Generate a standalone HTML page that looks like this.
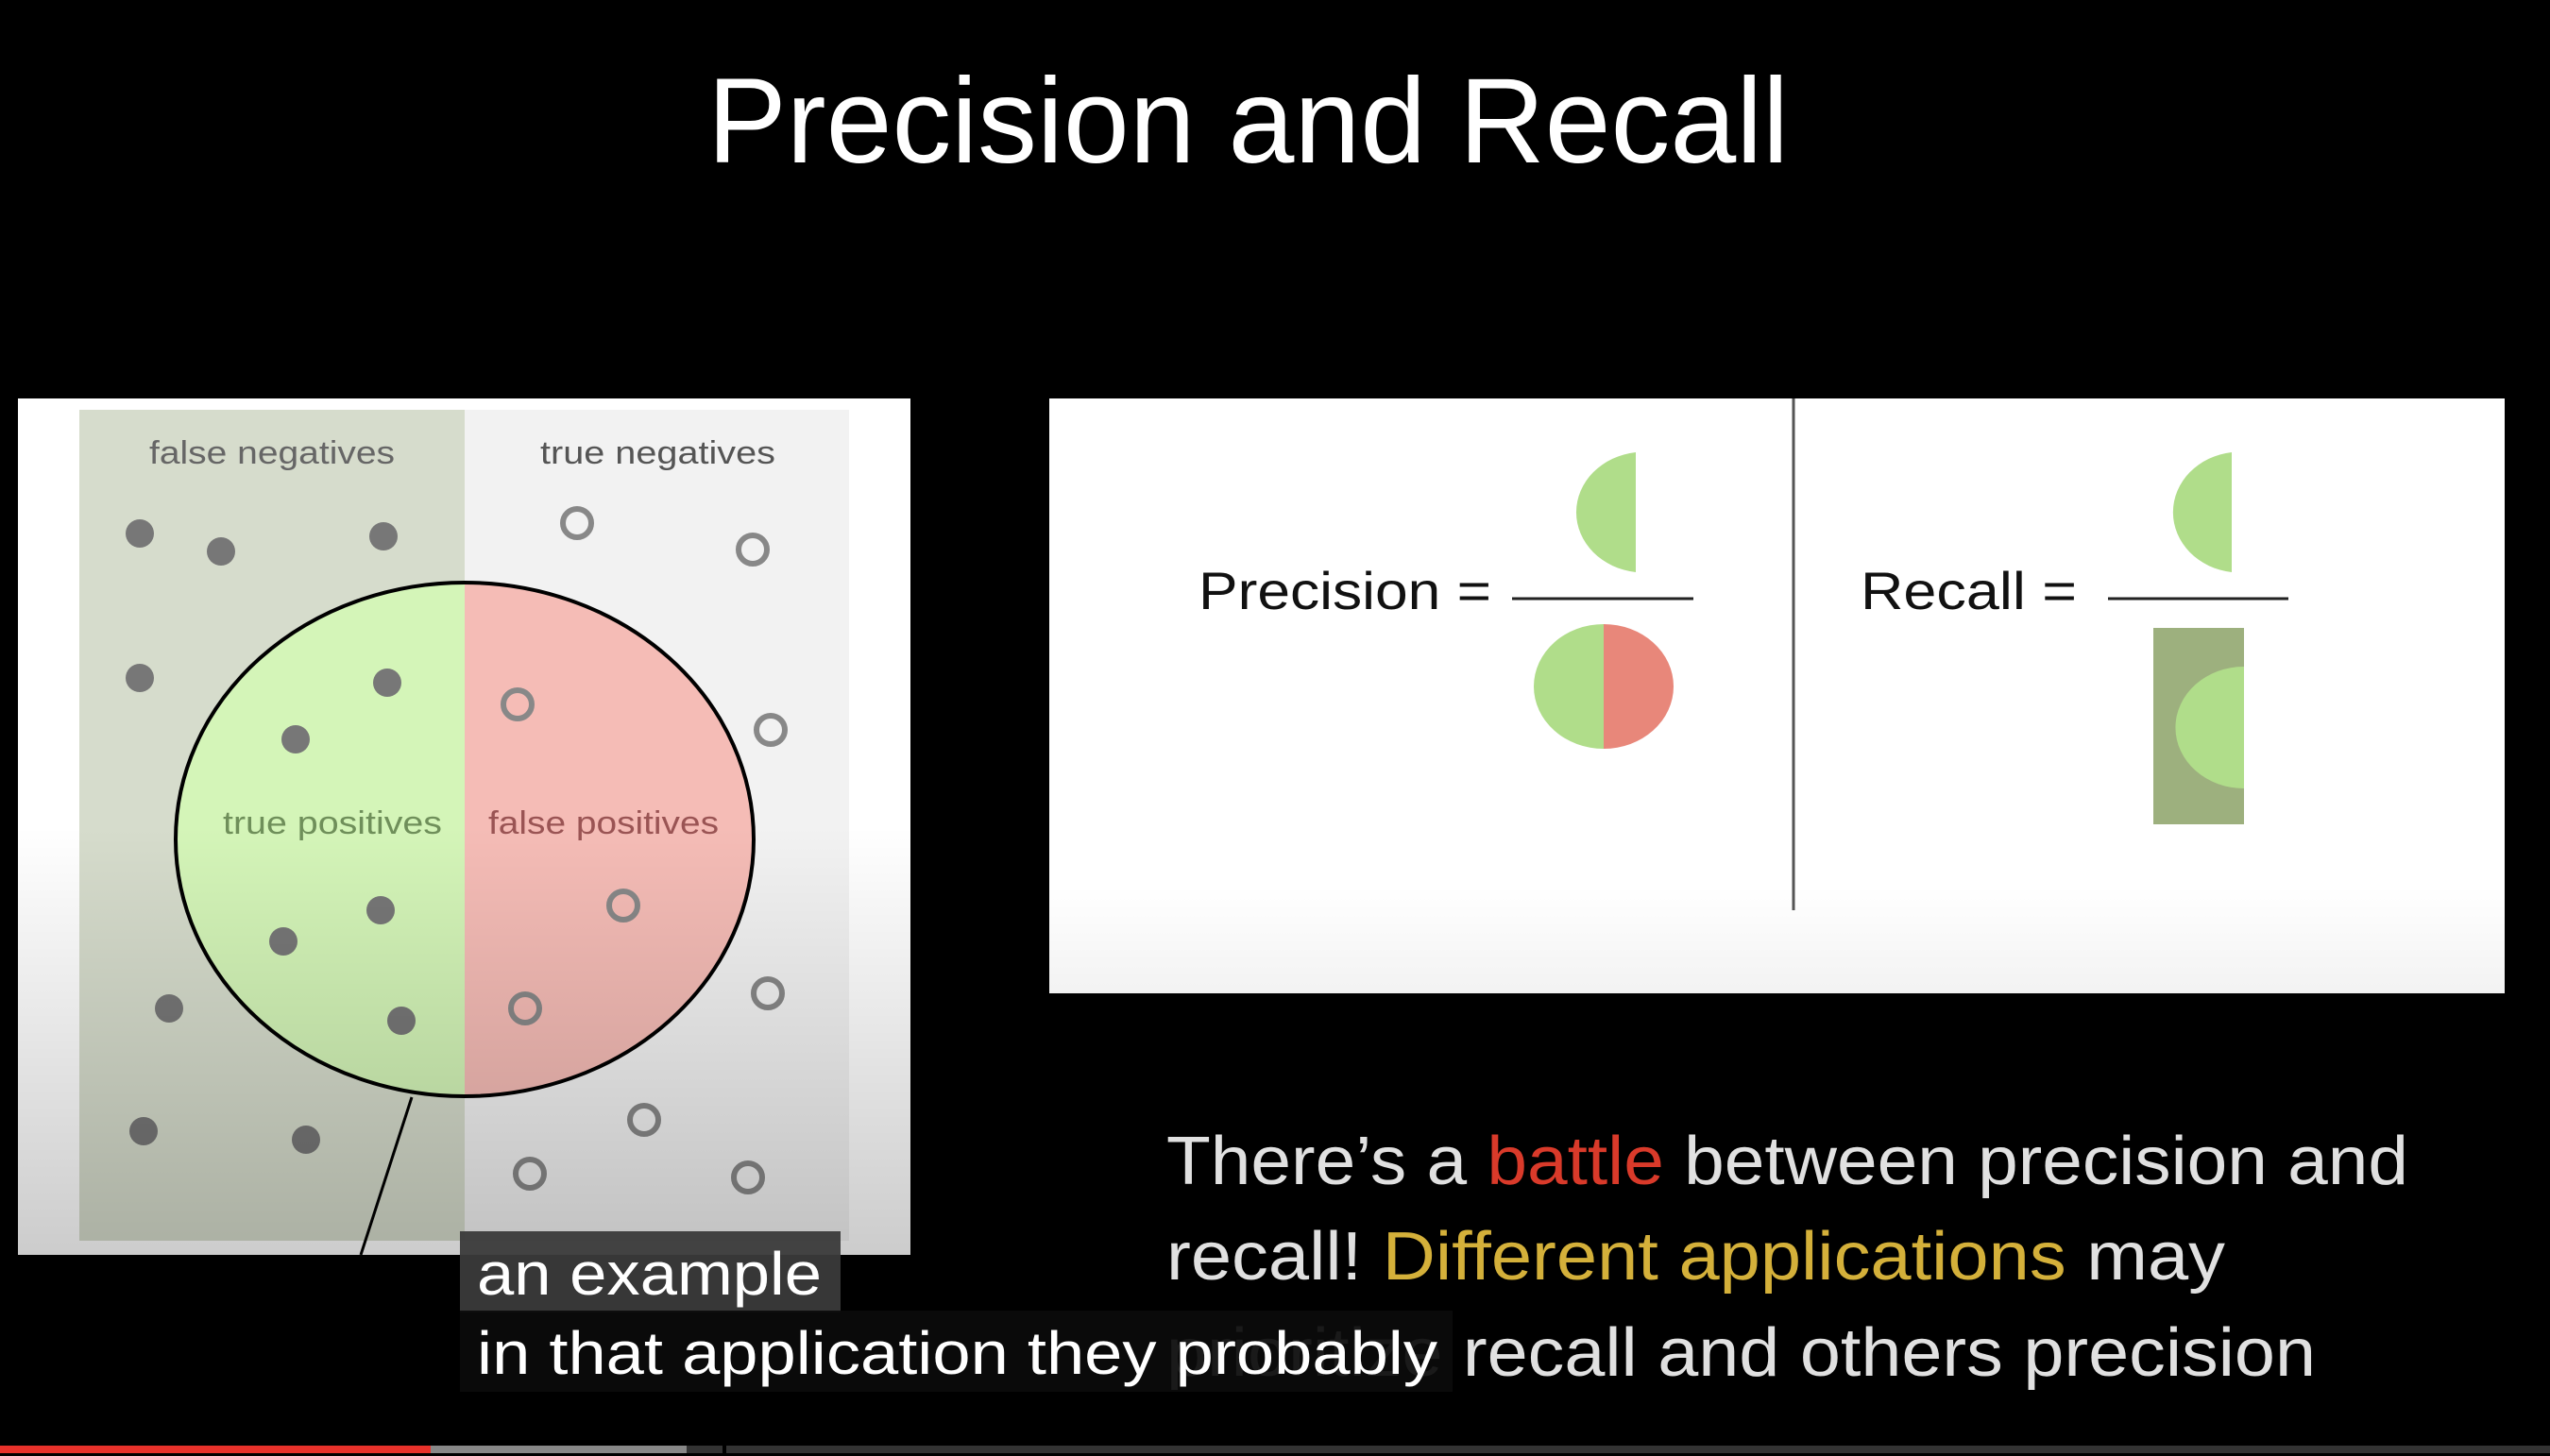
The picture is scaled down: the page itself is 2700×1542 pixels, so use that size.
<!DOCTYPE html>
<html><head><meta charset="utf-8"><style>
html,body{margin:0;padding:0;background:#000;width:2700px;height:1542px;overflow:hidden}
svg{display:block}
text{font-family:"Liberation Sans","DejaVu Sans",sans-serif}
</style></head><body>
<svg width="2700" height="1542" viewBox="0 0 2700 1542" xmlns="http://www.w3.org/2000/svg">
<defs>
<linearGradient id="shade" x1="0" y1="0" x2="0" y2="1">
<stop offset="0" stop-color="#000" stop-opacity="0"/>
<stop offset="0.5" stop-color="#000" stop-opacity="0"/>
<stop offset="1" stop-color="#000" stop-opacity="0.2"/>
</linearGradient>
<linearGradient id="shade2" x1="0" y1="0" x2="0" y2="1">
<stop offset="0" stop-color="#000" stop-opacity="0"/>
<stop offset="0.82" stop-color="#000" stop-opacity="0"/>
<stop offset="1" stop-color="#000" stop-opacity="0.05"/>
</linearGradient>
<clipPath id="cl"><rect x="0" y="0" width="492" height="1542"/></clipPath>
<clipPath id="cr"><rect x="492" y="0" width="600" height="1542"/></clipPath>
</defs>
<rect width="2700" height="1542" fill="#000"/>
<text x="749" y="172" font-size="128" fill="#fff" textLength="1145" lengthAdjust="spacingAndGlyphs">Precision and Recall</text>

<!-- left panel -->
<rect x="19" y="422" width="945" height="907" fill="#fff"/>
<rect x="84" y="434" width="408" height="880" fill="#d6dccc"/>
<rect x="492" y="434" width="407" height="880" fill="#f2f2f2"/>
<ellipse cx="492" cy="889" rx="306" ry="272" fill="#d4f5b8" clip-path="url(#cl)"/>
<ellipse cx="492" cy="889" rx="306" ry="272" fill="#f5bcb6" clip-path="url(#cr)"/>
<ellipse cx="492" cy="889" rx="306" ry="272" fill="none" stroke="#000" stroke-width="4"/>
<line x1="436" y1="1162" x2="382" y2="1329" stroke="#000" stroke-width="3"/>
<g fill="#777">
<circle cx="148" cy="565" r="15"/><circle cx="234" cy="584" r="15"/><circle cx="406" cy="568" r="15"/>
<circle cx="148" cy="718" r="15"/><circle cx="410" cy="723" r="15"/><circle cx="313" cy="783" r="15"/>
<circle cx="403" cy="964" r="15"/><circle cx="300" cy="997" r="15"/><circle cx="179" cy="1068" r="15"/>
<circle cx="425" cy="1081" r="15"/><circle cx="152" cy="1198" r="15"/><circle cx="324" cy="1207" r="15"/>
</g>
<g fill="none" stroke="#888" stroke-width="6">
<circle cx="611" cy="554" r="15"/><circle cx="797" cy="582" r="15"/><circle cx="548" cy="746" r="15"/>
<circle cx="816" cy="773" r="15"/><circle cx="660" cy="959" r="15"/><circle cx="813" cy="1052" r="15"/>
<circle cx="556" cy="1068" r="15"/><circle cx="682" cy="1186" r="15"/><circle cx="561" cy="1243" r="15"/>
<circle cx="792" cy="1247" r="15"/>
</g>
<text x="158" y="491" font-size="34" fill="#666" textLength="260" lengthAdjust="spacingAndGlyphs">false negatives</text>
<text x="572" y="491" font-size="34" fill="#555" textLength="249" lengthAdjust="spacingAndGlyphs">true negatives</text>
<text x="236" y="883" font-size="34" fill="#6f8f5a" textLength="232" lengthAdjust="spacingAndGlyphs">true positives</text>
<text x="517" y="883" font-size="34" fill="#9a5454" textLength="244" lengthAdjust="spacingAndGlyphs">false positives</text>
<rect x="19" y="422" width="945" height="907" fill="url(#shade)"/>

<!-- right panel -->
<rect x="1111" y="422" width="1541" height="630" fill="#fff"/>
<rect x="1111" y="422" width="1541" height="630" fill="url(#shade2)"/>
<line x1="1899" y1="422" x2="1899" y2="964" stroke="#555" stroke-width="3"/>
<text x="1269" y="645" font-size="56" fill="#111" textLength="310" lengthAdjust="spacingAndGlyphs">Precision =</text>
<line x1="1601" y1="634" x2="1793" y2="634" stroke="#222" stroke-width="3"/>
<path d="M1732 479 A72 64 0 0 0 1732 606 Z" fill="#b0dd8a"/>
<path d="M1698 661 A74 66 0 0 0 1698 793 Z" fill="#b0dd8a"/>
<path d="M1698 661 A74 66 0 0 1 1698 793 Z" fill="#e8877a"/>
<text x="1970" y="645" font-size="56" fill="#111" textLength="229" lengthAdjust="spacingAndGlyphs">Recall =</text>
<line x1="2232" y1="634" x2="2423" y2="634" stroke="#222" stroke-width="3"/>
<path d="M2363 479 A71 64 0 0 0 2363 606 Z" fill="#b0dd8a"/>
<rect x="2280" y="665" width="96" height="208" fill="#9db07e"/>
<path d="M2376 706 A72 64 0 0 0 2376 835 Z" fill="#b0dd8a"/>

<!-- bottom text -->
<text x="1235" y="1254" font-size="72" fill="#e0e0e0" textLength="1315" lengthAdjust="spacingAndGlyphs">There’s a <tspan fill="#d93a2a">battle</tspan> between precision and</text>
<text x="1235" y="1355" font-size="72" fill="#e0e0e0" textLength="1121" lengthAdjust="spacingAndGlyphs">recall! <tspan fill="#d4b03a">Different applications</tspan> may</text>
<text x="1235" y="1457" font-size="72" fill="#e0e0e0" textLength="1217" lengthAdjust="spacingAndGlyphs">prioritize recall and others precision</text>

<!-- subtitles -->
<rect x="487" y="1304" width="403" height="86" fill="#3a3a3a" opacity="0.95"/>
<rect x="487" y="1388" width="1051" height="86" fill="#0b0b0b" opacity="0.93"/>
<text x="505" y="1371" font-size="64" fill="#fff" textLength="365" lengthAdjust="spacingAndGlyphs">an example</text>
<text x="505" y="1455" font-size="64" fill="#fff" textLength="1017" lengthAdjust="spacingAndGlyphs">in that application they probably</text>

<!-- progress bar -->
<rect x="0" y="1531" width="2700" height="8" fill="#333"/>
<rect x="0" y="1531" width="456" height="8" fill="#e8312a"/>
<rect x="456" y="1531" width="271" height="8" fill="#888"/>
<rect x="765" y="1529" width="4" height="13" fill="#000"/>
</svg>
</body></html>
